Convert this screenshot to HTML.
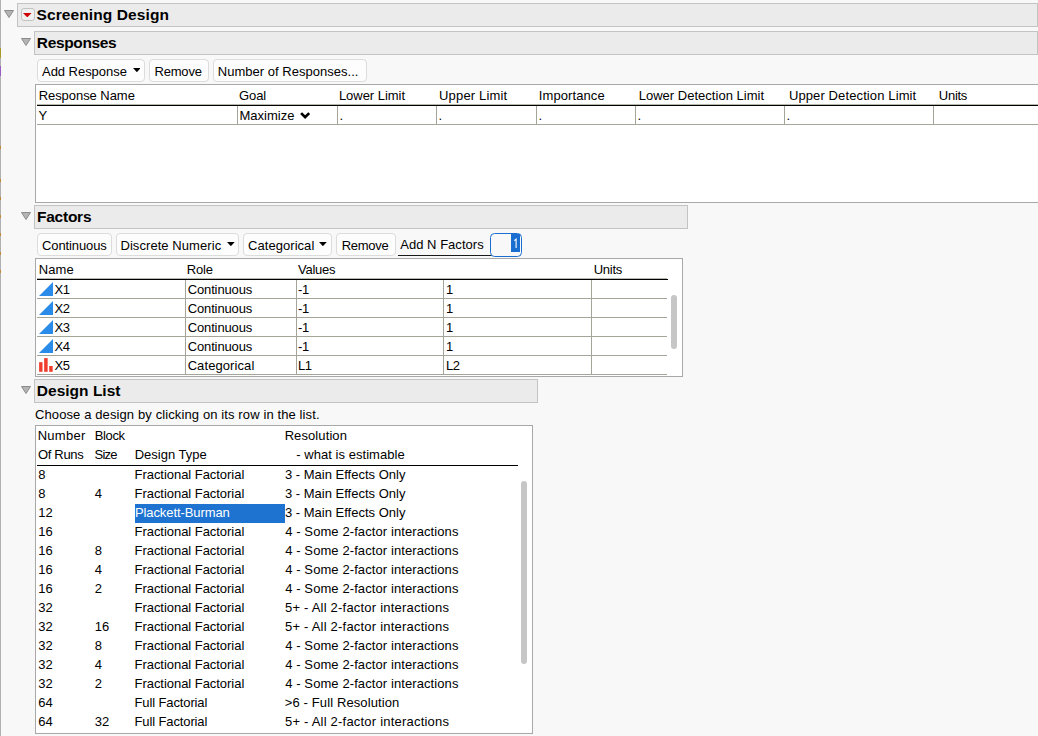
<!DOCTYPE html><html><head><meta charset="utf-8"><style>
html,body{margin:0;padding:0;}
body{width:1038px;height:736px;overflow:hidden;background:#f8f8f8;position:relative;font-family:"Liberation Sans",sans-serif;}
.t{position:absolute;white-space:pre;}
.b{position:absolute;box-sizing:content-box;}
</style></head><body>
<div class="b" style="left:0px;top:0px;width:1px;height:736px;background:#b0b0b0"></div>
<div class="b" style="left:0px;top:48px;width:1px;height:10px;background:#a89a2a"></div>
<div class="b" style="left:0px;top:66px;width:1px;height:10px;background:#9a5cc0"></div>
<div class="b" style="left:0px;top:146px;width:1px;height:3px;background:#c08838"></div>
<div class="b" style="left:0px;top:179px;width:1px;height:3px;background:#c08838"></div>
<div class="b" style="left:0px;top:197px;width:1px;height:3px;background:#c08838"></div>
<div class="b" style="left:0px;top:215px;width:1px;height:3px;background:#c08838"></div>
<div class="b" style="left:0px;top:233px;width:1px;height:3px;background:#c08838"></div>
<div class="b" style="left:0px;top:252px;width:1px;height:3px;background:#c08838"></div>
<div class="b" style="left:0px;top:270px;width:1px;height:3px;background:#c08838"></div>
<div class="b" style="left:17px;top:3px;width:1019px;height:22px;background:#ebebeb;border:1px solid #c3c3c3"></div>
<div class="t" style="left:36.53px;top:4.93px;font-size:15.5px;line-height:19px;font-weight:bold;color:#000;letter-spacing:0.106px;">Screening Design</div>
<svg class="b" style="left:4px;top:10px" width="10" height="8" viewBox="0 0 10 8"><polygon points="0.5,0.5 9.5,0.5 5.0,7.5" fill="#b4b4b4" stroke="#8c8c8c" stroke-width="1" stroke-linejoin="round"/></svg>
<div class="b" style="left:20.5px;top:8px;width:12.3px;height:11px;background:#f0f0f0;border:1.2px solid #c2c2c2;border-radius:3px"></div>
<svg class="b" style="left:23.2px;top:12.8px" width="8.5" height="4.5"><polygon points="0,0 8.5,0 4.25,4.4" fill="#d00000"/></svg>
<div class="b" style="left:34px;top:31px;width:1002px;height:22px;background:#ebebeb;border:1px solid #c3c3c3"></div>
<div class="t" style="left:36.85px;top:32.83px;font-size:15.5px;line-height:19px;font-weight:bold;color:#000;letter-spacing:-0.353px;">Responses</div>
<svg class="b" style="left:21px;top:38px" width="10" height="8" viewBox="0 0 10 8"><polygon points="0.5,0.5 9.5,0.5 5.0,7.5" fill="#b4b4b4" stroke="#8c8c8c" stroke-width="1" stroke-linejoin="round"/></svg>
<div class="b" style="left:37px;top:59px;width:106px;height:21px;background:#fdfdfd;border:1px solid #dcdcdc;border-radius:4px"></div>
<div class="t" style="left:42.02px;top:63.50px;font-size:13px;line-height:16px;color:#000;letter-spacing:-0.040px;">Add Response</div>
<svg class="b" style="left:132.7px;top:68px" width="7.800000000000011" height="4.2"><polygon points="0,0 7.800000000000011,0 3.9000000000000057,4.2" fill="#000"/></svg>
<div class="b" style="left:149px;top:59px;width:58px;height:21px;background:#fdfdfd;border:1px solid #dcdcdc;border-radius:4px"></div>
<div class="t" style="left:154.43px;top:63.50px;font-size:13px;line-height:16px;color:#000;letter-spacing:-0.173px;">Remove</div>
<div class="b" style="left:213px;top:59px;width:152px;height:21px;background:#fdfdfd;border:1px solid #dcdcdc;border-radius:4px"></div>
<div class="t" style="left:217.73px;top:63.50px;font-size:13px;line-height:16px;color:#000;letter-spacing:0.025px;">Number of Responses...</div>
<div class="b" style="left:35px;top:84px;width:1010px;height:117px;background:#fff;border:1px solid #a8a8a8;border-right:none"></div>
<div class="t" style="left:38.63px;top:87.50px;font-size:13px;line-height:16px;color:#000;letter-spacing:-0.049px;">Response Name</div>
<div class="t" style="left:239.05px;top:87.50px;font-size:13px;line-height:16px;color:#000;letter-spacing:-0.112px;">Goal</div>
<div class="t" style="left:338.93px;top:87.50px;font-size:13px;line-height:16px;color:#000;letter-spacing:-0.039px;">Lower Limit</div>
<div class="t" style="left:439.09px;top:87.50px;font-size:13px;line-height:16px;color:#000;letter-spacing:0.154px;">Upper Limit</div>
<div class="t" style="left:538.8px;top:87.50px;font-size:13px;line-height:16px;color:#000;letter-spacing:0.091px;">Importance</div>
<div class="t" style="left:638.63px;top:87.50px;font-size:13px;line-height:16px;color:#000;letter-spacing:0.024px;">Lower Detection Limit</div>
<div class="t" style="left:788.89px;top:87.50px;font-size:13px;line-height:16px;color:#000;letter-spacing:0.116px;">Upper Detection Limit</div>
<div class="t" style="left:938.79px;top:87.50px;font-size:13px;line-height:16px;color:#000;letter-spacing:-0.261px;">Units</div>
<div class="b" style="left:37px;top:104px;width:1001px;height:1px;background:#b8b8ac"></div>
<div class="b" style="left:37px;top:105px;width:1001px;height:1px;background:#000"></div>
<div class="b" style="left:237px;top:106px;width:1px;height:18px;background:#a4a498"></div>
<div class="b" style="left:337px;top:106px;width:1px;height:18px;background:#a4a498"></div>
<div class="b" style="left:436px;top:106px;width:1px;height:18px;background:#a4a498"></div>
<div class="b" style="left:536px;top:106px;width:1px;height:18px;background:#a4a498"></div>
<div class="b" style="left:635px;top:106px;width:1px;height:18px;background:#a4a498"></div>
<div class="b" style="left:784px;top:106px;width:1px;height:18px;background:#a4a498"></div>
<div class="b" style="left:933px;top:106px;width:1px;height:18px;background:#a4a498"></div>
<div class="b" style="left:37px;top:124px;width:1001px;height:1px;background:#a4a498"></div>
<div class="t" style="left:38.5px;top:107.50px;font-size:13px;line-height:16px;color:#000;">Y</div>
<div class="t" style="left:239.43px;top:107.50px;font-size:13px;line-height:16px;color:#000;letter-spacing:0.019px;">Maximize</div>
<svg class="b" style="left:300px;top:111px" width="11" height="9" viewBox="0 0 11 9"><polyline points="1.1,2.1 5.15,6.2 9.2,2.1" fill="none" stroke="#000" stroke-width="2.7"/></svg>
<div class="t" style="left:339.6px;top:107.50px;font-size:13px;line-height:16px;color:#000;">.</div>
<div class="t" style="left:438.6px;top:107.50px;font-size:13px;line-height:16px;color:#000;">.</div>
<div class="t" style="left:538.6px;top:107.50px;font-size:13px;line-height:16px;color:#000;">.</div>
<div class="t" style="left:637.6px;top:107.50px;font-size:13px;line-height:16px;color:#000;">.</div>
<div class="t" style="left:786.6px;top:107.50px;font-size:13px;line-height:16px;color:#000;">.</div>
<div class="b" style="left:34px;top:205px;width:652px;height:22px;background:#ebebeb;border:1px solid #c3c3c3"></div>
<div class="t" style="left:37.0px;top:207.03px;font-size:15.5px;line-height:19px;font-weight:bold;color:#000;letter-spacing:-0.246px;">Factors</div>
<svg class="b" style="left:21px;top:212px" width="10" height="8" viewBox="0 0 10 8"><polygon points="0.5,0.5 9.5,0.5 5.0,7.5" fill="#b4b4b4" stroke="#8c8c8c" stroke-width="1" stroke-linejoin="round"/></svg>
<div class="b" style="left:37px;top:233px;width:73px;height:21px;background:#fdfdfd;border:1px solid #dcdcdc;border-radius:4px"></div>
<div class="t" style="left:42.05px;top:237.50px;font-size:13px;line-height:16px;color:#000;letter-spacing:-0.119px;">Continuous</div>
<div class="b" style="left:116px;top:233px;width:121px;height:21px;background:#fdfdfd;border:1px solid #dcdcdc;border-radius:4px"></div>
<div class="t" style="left:120.43px;top:237.50px;font-size:13px;line-height:16px;color:#000;letter-spacing:0.070px;">Discrete Numeric</div>
<svg class="b" style="left:227px;top:242px" width="7.699999999999989" height="4.2"><polygon points="0,0 7.699999999999989,0 3.8499999999999943,4.2" fill="#000"/></svg>
<div class="b" style="left:243px;top:233px;width:87px;height:21px;background:#fdfdfd;border:1px solid #dcdcdc;border-radius:4px"></div>
<div class="t" style="left:248.05px;top:237.50px;font-size:13px;line-height:16px;color:#000;letter-spacing:0.048px;">Categorical</div>
<svg class="b" style="left:319.4px;top:242px" width="7.800000000000011" height="4.2"><polygon points="0,0 7.800000000000011,0 3.9000000000000057,4.2" fill="#000"/></svg>
<div class="b" style="left:336px;top:233px;width:58px;height:21px;background:#fdfdfd;border:1px solid #dcdcdc;border-radius:4px"></div>
<div class="t" style="left:341.63px;top:237.50px;font-size:13px;line-height:16px;color:#000;letter-spacing:-0.254px;">Remove</div>
<div class="t" style="left:400.27px;top:237.00px;font-size:13px;line-height:16px;color:#000;letter-spacing:0.024px;">Add N Factors</div>
<div class="b" style="left:398px;top:255px;width:94px;height:1px;background:#1a1a1a"></div>
<div class="b" style="left:490px;top:233px;width:30px;height:22px;background:#f8f8f8;border:1px solid #1a6ed0;border-radius:4.5px"></div>
<div class="b" style="left:511px;top:234px;width:8.7px;height:17.5px;background:#1a6ed0"></div>
<svg class="b" style="left:510px;top:236px" width="12" height="14"><path d="M4.3,4.6 L6.1,3.2 L6.1,12" fill="none" stroke="#fff" stroke-width="1.1"/></svg>
<div class="b" style="left:35px;top:258px;width:646px;height:117px;background:#fff;border:1px solid #a8a8a8"></div>
<div class="t" style="left:38.63px;top:261.50px;font-size:13px;line-height:16px;color:#000;letter-spacing:0.116px;">Name</div>
<div class="t" style="left:186.63px;top:261.50px;font-size:13px;line-height:16px;color:#000;letter-spacing:-0.130px;">Role</div>
<div class="t" style="left:298.04px;top:261.50px;font-size:13px;line-height:16px;color:#000;letter-spacing:-0.250px;">Values</div>
<div class="t" style="left:593.69px;top:261.50px;font-size:13px;line-height:16px;color:#000;letter-spacing:-0.236px;">Units</div>
<div class="b" style="left:37px;top:278px;width:630px;height:1px;background:#b8b8ac"></div>
<div class="b" style="left:37px;top:279px;width:631px;height:1px;background:#000"></div>
<div class="b" style="left:37px;top:298px;width:630px;height:1px;background:#a4a498"></div>
<div class="b" style="left:185px;top:280px;width:1px;height:18px;background:#a4a498"></div>
<div class="b" style="left:296px;top:280px;width:1px;height:18px;background:#a4a498"></div>
<div class="b" style="left:443px;top:280px;width:1px;height:18px;background:#a4a498"></div>
<div class="b" style="left:591px;top:280px;width:1px;height:18px;background:#a4a498"></div>
<svg class="b" style="left:39px;top:282px" width="14" height="14"><polygon points="14,0 14,14 0,14" fill="#2a8ce8"/></svg>
<div class="t" style="left:54.5px;top:281.50px;font-size:13px;line-height:16px;color:#000;letter-spacing:-0.3px">X1</div>
<div class="t" style="left:187.65px;top:281.50px;font-size:13px;line-height:16px;color:#000;letter-spacing:-0.119px;">Continuous</div>
<div class="t" style="left:298.1px;top:281.50px;font-size:13px;line-height:16px;color:#000;letter-spacing:-0.4px">-1</div>
<div class="t" style="left:446.0px;top:281.50px;font-size:13px;line-height:16px;color:#000;letter-spacing:-0.4px">1</div>
<div class="b" style="left:37px;top:317px;width:630px;height:1px;background:#a4a498"></div>
<div class="b" style="left:185px;top:299px;width:1px;height:18px;background:#a4a498"></div>
<div class="b" style="left:296px;top:299px;width:1px;height:18px;background:#a4a498"></div>
<div class="b" style="left:443px;top:299px;width:1px;height:18px;background:#a4a498"></div>
<div class="b" style="left:591px;top:299px;width:1px;height:18px;background:#a4a498"></div>
<svg class="b" style="left:39px;top:301px" width="14" height="14"><polygon points="14,0 14,14 0,14" fill="#2a8ce8"/></svg>
<div class="t" style="left:54.5px;top:300.50px;font-size:13px;line-height:16px;color:#000;letter-spacing:-0.3px">X2</div>
<div class="t" style="left:187.65px;top:300.50px;font-size:13px;line-height:16px;color:#000;letter-spacing:-0.119px;">Continuous</div>
<div class="t" style="left:298.1px;top:300.50px;font-size:13px;line-height:16px;color:#000;letter-spacing:-0.4px">-1</div>
<div class="t" style="left:446.0px;top:300.50px;font-size:13px;line-height:16px;color:#000;letter-spacing:-0.4px">1</div>
<div class="b" style="left:37px;top:336px;width:630px;height:1px;background:#a4a498"></div>
<div class="b" style="left:185px;top:318px;width:1px;height:18px;background:#a4a498"></div>
<div class="b" style="left:296px;top:318px;width:1px;height:18px;background:#a4a498"></div>
<div class="b" style="left:443px;top:318px;width:1px;height:18px;background:#a4a498"></div>
<div class="b" style="left:591px;top:318px;width:1px;height:18px;background:#a4a498"></div>
<svg class="b" style="left:39px;top:320px" width="14" height="14"><polygon points="14,0 14,14 0,14" fill="#2a8ce8"/></svg>
<div class="t" style="left:54.5px;top:319.50px;font-size:13px;line-height:16px;color:#000;letter-spacing:-0.3px">X3</div>
<div class="t" style="left:187.65px;top:319.50px;font-size:13px;line-height:16px;color:#000;letter-spacing:-0.119px;">Continuous</div>
<div class="t" style="left:298.1px;top:319.50px;font-size:13px;line-height:16px;color:#000;letter-spacing:-0.4px">-1</div>
<div class="t" style="left:446.0px;top:319.50px;font-size:13px;line-height:16px;color:#000;letter-spacing:-0.4px">1</div>
<div class="b" style="left:37px;top:355px;width:630px;height:1px;background:#a4a498"></div>
<div class="b" style="left:185px;top:337px;width:1px;height:18px;background:#a4a498"></div>
<div class="b" style="left:296px;top:337px;width:1px;height:18px;background:#a4a498"></div>
<div class="b" style="left:443px;top:337px;width:1px;height:18px;background:#a4a498"></div>
<div class="b" style="left:591px;top:337px;width:1px;height:18px;background:#a4a498"></div>
<svg class="b" style="left:39px;top:339px" width="14" height="14"><polygon points="14,0 14,14 0,14" fill="#2a8ce8"/></svg>
<div class="t" style="left:54.5px;top:338.50px;font-size:13px;line-height:16px;color:#000;letter-spacing:-0.3px">X4</div>
<div class="t" style="left:187.65px;top:338.50px;font-size:13px;line-height:16px;color:#000;letter-spacing:-0.119px;">Continuous</div>
<div class="t" style="left:298.1px;top:338.50px;font-size:13px;line-height:16px;color:#000;letter-spacing:-0.4px">-1</div>
<div class="t" style="left:446.0px;top:338.50px;font-size:13px;line-height:16px;color:#000;letter-spacing:-0.4px">1</div>
<div class="b" style="left:37px;top:374px;width:630px;height:1px;background:#a4a498"></div>
<div class="b" style="left:185px;top:356px;width:1px;height:18px;background:#a4a498"></div>
<div class="b" style="left:296px;top:356px;width:1px;height:18px;background:#a4a498"></div>
<div class="b" style="left:443px;top:356px;width:1px;height:18px;background:#a4a498"></div>
<div class="b" style="left:591px;top:356px;width:1px;height:18px;background:#a4a498"></div>
<svg class="b" style="left:39px;top:358px" width="14" height="14"><rect x="0.1" y="4.2" width="3.4" height="9.6" fill="#f03c2e"/><rect x="5.15" y="0.1" width="3.5" height="13.7" fill="#f03c2e"/><rect x="10.2" y="8" width="3.5" height="5.8" fill="#f03c2e"/></svg>
<div class="t" style="left:54.5px;top:357.50px;font-size:13px;line-height:16px;color:#000;letter-spacing:-0.3px">X5</div>
<div class="t" style="left:187.65px;top:357.50px;font-size:13px;line-height:16px;color:#000;letter-spacing:0.088px;">Categorical</div>
<div class="t" style="left:298.0px;top:357.50px;font-size:13px;line-height:16px;color:#000;letter-spacing:-0.4px">L1</div>
<div class="t" style="left:446.0px;top:357.50px;font-size:13px;line-height:16px;color:#000;letter-spacing:-0.4px">L2</div>
<div class="b" style="left:671px;top:295px;width:6px;height:54px;background:#c6c6c6;border-radius:3px"></div>
<div class="b" style="left:34px;top:379px;width:502px;height:22px;background:#ebebeb;border:1px solid #c3c3c3"></div>
<div class="t" style="left:36.85px;top:381.13px;font-size:15.5px;line-height:19px;font-weight:bold;color:#000;letter-spacing:0.009px;">Design List</div>
<svg class="b" style="left:21px;top:386px" width="10" height="8" viewBox="0 0 10 8"><polygon points="0.5,0.5 9.5,0.5 5.0,7.5" fill="#b4b4b4" stroke="#8c8c8c" stroke-width="1" stroke-linejoin="round"/></svg>
<div class="t" style="left:34.95px;top:406.50px;font-size:13px;line-height:16px;color:#000;letter-spacing:0.114px;">Choose a design by clicking on its row in the list.</div>
<div class="b" style="left:35px;top:425px;width:496px;height:307px;background:#fff;border:1px solid #a8a8a8"></div>
<div class="t" style="left:37.63px;top:427.80px;font-size:13px;line-height:16px;color:#000;letter-spacing:0.290px;">Number</div>
<div class="t" style="left:94.63px;top:427.80px;font-size:13px;line-height:16px;color:#000;letter-spacing:-0.328px;">Block</div>
<div class="t" style="left:284.63px;top:427.80px;font-size:13px;line-height:16px;color:#000;letter-spacing:0.096px;">Resolution</div>
<div class="t" style="left:38.08px;top:446.80px;font-size:13px;line-height:16px;color:#000;letter-spacing:-0.351px;">Of Runs</div>
<div class="t" style="left:94.62px;top:446.80px;font-size:13px;line-height:16px;color:#000;letter-spacing:-0.816px;">Size</div>
<div class="t" style="left:134.73px;top:446.80px;font-size:13px;line-height:16px;color:#000;letter-spacing:-0.010px;">Design Type</div>
<div class="t" style="left:296.32px;top:446.80px;font-size:13px;line-height:16px;color:#000;letter-spacing:0.039px;">- what is estimable</div>
<div class="b" style="left:37px;top:465px;width:481px;height:1px;background:#000"></div>
<div class="t" style="left:38.2px;top:466.50px;font-size:13px;line-height:16px;color:#000;">8</div>
<div class="t" style="left:134.53px;top:466.50px;font-size:13px;line-height:16px;color:#000;letter-spacing:-0.041px;">Fractional Factorial</div>
<div class="t" style="left:285.01px;top:467.30px;font-size:13px;line-height:16px;color:#000;letter-spacing:0.000px;">3 - Main Effects Only</div>
<div class="t" style="left:38.2px;top:485.50px;font-size:13px;line-height:16px;color:#000;">8</div>
<div class="t" style="left:94.8px;top:485.50px;font-size:13px;line-height:16px;color:#000;">4</div>
<div class="t" style="left:134.53px;top:485.50px;font-size:13px;line-height:16px;color:#000;letter-spacing:-0.041px;">Fractional Factorial</div>
<div class="t" style="left:285.01px;top:486.30px;font-size:13px;line-height:16px;color:#000;letter-spacing:0.000px;">3 - Main Effects Only</div>
<div class="b" style="left:135px;top:504px;width:150px;height:19px;background:#1e72d0"></div>
<div class="t" style="left:38.2px;top:504.50px;font-size:13px;line-height:16px;color:#000;">12</div>
<div class="t" style="left:134.93px;top:504.50px;font-size:13px;line-height:16px;color:#fff;letter-spacing:-0.085px;">Plackett-Burman</div>
<div class="t" style="left:285.01px;top:505.30px;font-size:13px;line-height:16px;color:#000;letter-spacing:0.000px;">3 - Main Effects Only</div>
<div class="t" style="left:38.2px;top:523.50px;font-size:13px;line-height:16px;color:#000;">16</div>
<div class="t" style="left:134.53px;top:523.50px;font-size:13px;line-height:16px;color:#000;letter-spacing:-0.041px;">Fractional Factorial</div>
<div class="t" style="left:285.21px;top:524.30px;font-size:13px;line-height:16px;color:#000;letter-spacing:0.094px;">4 - Some 2-factor interactions</div>
<div class="t" style="left:38.2px;top:542.50px;font-size:13px;line-height:16px;color:#000;">16</div>
<div class="t" style="left:94.8px;top:542.50px;font-size:13px;line-height:16px;color:#000;">8</div>
<div class="t" style="left:134.53px;top:542.50px;font-size:13px;line-height:16px;color:#000;letter-spacing:-0.041px;">Fractional Factorial</div>
<div class="t" style="left:285.21px;top:543.30px;font-size:13px;line-height:16px;color:#000;letter-spacing:0.094px;">4 - Some 2-factor interactions</div>
<div class="t" style="left:38.2px;top:561.50px;font-size:13px;line-height:16px;color:#000;">16</div>
<div class="t" style="left:94.8px;top:561.50px;font-size:13px;line-height:16px;color:#000;">4</div>
<div class="t" style="left:134.53px;top:561.50px;font-size:13px;line-height:16px;color:#000;letter-spacing:-0.041px;">Fractional Factorial</div>
<div class="t" style="left:285.21px;top:562.30px;font-size:13px;line-height:16px;color:#000;letter-spacing:0.094px;">4 - Some 2-factor interactions</div>
<div class="t" style="left:38.2px;top:580.50px;font-size:13px;line-height:16px;color:#000;">16</div>
<div class="t" style="left:94.8px;top:580.50px;font-size:13px;line-height:16px;color:#000;">2</div>
<div class="t" style="left:134.53px;top:580.50px;font-size:13px;line-height:16px;color:#000;letter-spacing:-0.041px;">Fractional Factorial</div>
<div class="t" style="left:285.21px;top:581.30px;font-size:13px;line-height:16px;color:#000;letter-spacing:0.094px;">4 - Some 2-factor interactions</div>
<div class="t" style="left:38.2px;top:599.50px;font-size:13px;line-height:16px;color:#000;">32</div>
<div class="t" style="left:134.53px;top:599.50px;font-size:13px;line-height:16px;color:#000;letter-spacing:-0.041px;">Fractional Factorial</div>
<div class="t" style="left:284.98px;top:600.30px;font-size:13px;line-height:16px;color:#000;letter-spacing:0.210px;">5+ - All 2-factor interactions</div>
<div class="t" style="left:38.2px;top:618.50px;font-size:13px;line-height:16px;color:#000;">32</div>
<div class="t" style="left:94.8px;top:618.50px;font-size:13px;line-height:16px;color:#000;">16</div>
<div class="t" style="left:134.53px;top:618.50px;font-size:13px;line-height:16px;color:#000;letter-spacing:-0.041px;">Fractional Factorial</div>
<div class="t" style="left:284.98px;top:619.30px;font-size:13px;line-height:16px;color:#000;letter-spacing:0.210px;">5+ - All 2-factor interactions</div>
<div class="t" style="left:38.2px;top:637.50px;font-size:13px;line-height:16px;color:#000;">32</div>
<div class="t" style="left:94.8px;top:637.50px;font-size:13px;line-height:16px;color:#000;">8</div>
<div class="t" style="left:134.53px;top:637.50px;font-size:13px;line-height:16px;color:#000;letter-spacing:-0.041px;">Fractional Factorial</div>
<div class="t" style="left:285.21px;top:638.30px;font-size:13px;line-height:16px;color:#000;letter-spacing:0.094px;">4 - Some 2-factor interactions</div>
<div class="t" style="left:38.2px;top:656.50px;font-size:13px;line-height:16px;color:#000;">32</div>
<div class="t" style="left:94.8px;top:656.50px;font-size:13px;line-height:16px;color:#000;">4</div>
<div class="t" style="left:134.53px;top:656.50px;font-size:13px;line-height:16px;color:#000;letter-spacing:-0.041px;">Fractional Factorial</div>
<div class="t" style="left:285.21px;top:657.30px;font-size:13px;line-height:16px;color:#000;letter-spacing:0.094px;">4 - Some 2-factor interactions</div>
<div class="t" style="left:38.2px;top:675.50px;font-size:13px;line-height:16px;color:#000;">32</div>
<div class="t" style="left:94.8px;top:675.50px;font-size:13px;line-height:16px;color:#000;">2</div>
<div class="t" style="left:134.53px;top:675.50px;font-size:13px;line-height:16px;color:#000;letter-spacing:-0.041px;">Fractional Factorial</div>
<div class="t" style="left:285.21px;top:676.30px;font-size:13px;line-height:16px;color:#000;letter-spacing:0.094px;">4 - Some 2-factor interactions</div>
<div class="t" style="left:38.2px;top:694.50px;font-size:13px;line-height:16px;color:#000;">64</div>
<div class="t" style="left:134.53px;top:694.50px;font-size:13px;line-height:16px;color:#000;letter-spacing:-0.121px;">Full Factorial</div>
<div class="t" style="left:284.85px;top:695.30px;font-size:13px;line-height:16px;color:#000;letter-spacing:0.111px;">&gt;6 - Full Resolution</div>
<div class="t" style="left:38.2px;top:713.50px;font-size:13px;line-height:16px;color:#000;">64</div>
<div class="t" style="left:94.8px;top:713.50px;font-size:13px;line-height:16px;color:#000;">32</div>
<div class="t" style="left:134.53px;top:713.50px;font-size:13px;line-height:16px;color:#000;letter-spacing:-0.121px;">Full Factorial</div>
<div class="t" style="left:284.98px;top:714.30px;font-size:13px;line-height:16px;color:#000;letter-spacing:0.210px;">5+ - All 2-factor interactions</div>
<div class="b" style="left:521px;top:481px;width:6px;height:183px;background:#c6c6c6;border-radius:3px"></div>
</body></html>
